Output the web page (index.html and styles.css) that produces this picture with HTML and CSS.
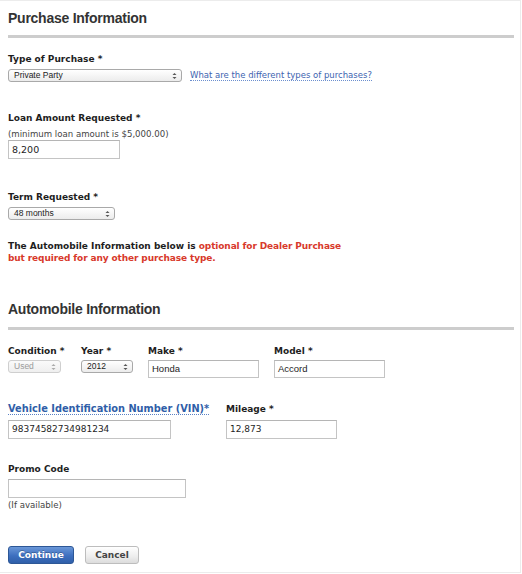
FILE: index.html
```html
<!DOCTYPE html>
<html>
<head>
<meta charset="utf-8">
<link rel="stylesheet" href="styles.css">
</head>
<body>
<div class="page">
  <h2 class="heading">Purchase Information</h2>
  <div class="rule"></div>

  <div class="label lbl-first">Type of Purchase *</div>
  <div class="row-inline">
    <span class="sel sel-type"><span class="sel-text">Private Party</span><svg class="arrows" width="5" height="8" viewBox="0 0 5 8"><path d="M0.5 3 L2.5 1 L4.5 3 Z M0.5 5 L2.5 7 L4.5 5 Z" fill="#555"/></svg></span>
    <a class="help-link">What are the different types of purchases?</a>
  </div>

  <div class="label lbl-loan">Loan Amount Requested *</div>
  <div class="hint">(minimum loan amount is $5,000.00)</div>
  <div class="input in-loan">8,200</div>

  <div class="label lbl-term">Term Requested *</div>
  <span class="sel sel-term"><span class="sel-text">48 months</span><svg class="arrows" width="5" height="8" viewBox="0 0 5 8"><path d="M0.5 3 L2.5 1 L4.5 3 Z M0.5 5 L2.5 7 L4.5 5 Z" fill="#555"/></svg></span>

  <p class="notice">The Automobile Information below is <span class="red">optional for Dealer Purchase<br>but required for any other purchase type.</span></p>

  <h2 class="heading heading2">Automobile Information</h2>
  <div class="rule rule2"></div>

  <div class="grid4">
    <div class="label">Condition *</div>
    <div class="label">Year *</div>
    <div class="label">Make *</div>
    <div class="label">Model *</div>
    <span class="sel sel-used disabled"><span class="sel-text">Used</span><svg class="arrows" width="5" height="8" viewBox="0 0 5 8"><path d="M0.5 3 L2.5 1 L4.5 3 Z M0.5 5 L2.5 7 L4.5 5 Z" fill="#aaa"/></svg></span>
    <span class="sel sel-year"><span class="sel-text">2012</span><svg class="arrows" width="5" height="8" viewBox="0 0 5 8"><path d="M0.5 3 L2.5 1 L4.5 3 Z M0.5 5 L2.5 7 L4.5 5 Z" fill="#555"/></svg></span>
    <div class="input in-sans in-make">Honda</div>
    <div class="input in-sans in-make">Accord</div>
  </div>

  <div class="grid2">
    <div class="label"><span class="vin">Vehicle Identification Number (VIN)*</span></div>
    <div class="label">Mileage *</div>
    <div class="input in-vin">98374582734981234</div>
    <div class="input in-mile">12,873</div>
  </div>

  <div class="label lbl-promo">Promo Code</div>
  <div class="input in-promo"></div>
  <div class="hint hint-promo">(If available)</div>

  <div class="buttons">
    <button class="btn btn-primary">Continue</button>
    <button class="btn btn-cancel">Cancel</button>
  </div>
</div>
</body>
</html>
```

FILE: styles.css
```css
html, body {
  margin: 0;
  padding: 0;
  background: #fff;
}
body {
  font-family: "DejaVu Sans", Verdana, sans-serif;
  color: #222;
}
.page {
  box-sizing: border-box;
  width: 521px;
  height: 573px;
  border-top: 1px solid #ececec;
  border-right: 1px solid #ececec;
  border-bottom: 1px solid #ececec;
  padding: 9px 6px 0 8px;
}
.heading {
  margin: 0;
  font-family: "Liberation Sans", Arial, sans-serif;
  font-weight: bold;
  font-size: 14px;
  line-height: 16px;
  color: #333;
  letter-spacing: -0.25px;
}
.rule {
  height: 3px;
  background: #cdcdcd;
  margin-top: 9px;
}
.label {
  font-weight: bold;
  font-size: 9px;
  line-height: 11px;
  color: #1e1e1e;
}
.lbl-first { margin-top: 16px; }
.row-inline {
  display: flex;
  align-items: center;
  margin-top: 4px;
  gap: 8px;
}
.sel {
  position: relative;
  display: inline-block;
  box-sizing: border-box;
  height: 13px;
  border: 1px solid #a9a9a9;
  border-radius: 3px;
  background: linear-gradient(#ffffff, #ececec);
  font-family: "Liberation Sans", Arial, sans-serif;
  font-size: 8.5px;
  line-height: 11px;
  color: #222;
  padding-left: 5px;
}
.sel .arrows {
  position: absolute;
  right: 4px;
  top: 1.5px;
}
.sel-type { width: 174px; }
.sel-term { width: 107px; margin-top: 4px; display: block; }
.sel-used { width: 53px; }
.sel-year { width: 52px; }
.disabled {
  border-color: #cfcfcf;
  color: #9a9a9a;
  background: linear-gradient(#fafafa, #efefef);
}
.help-link {
  font-size: 8.5px;
  line-height: 10px;
  color: #3d64b0;
  border-bottom: 1px dotted #6c8fcf;
  text-decoration: none;
}
.lbl-loan { margin-top: 31px; }
.hint {
  font-size: 8.6px;
  line-height: 10px;
  color: #444;
  margin-top: 5px;
}
.input {
  box-sizing: border-box;
  height: 19px;
  border: 1px solid #c4c4c4;
  border-top-color: #b5b5b5;
  background: #fff;
  font-size: 9px;
  line-height: 17px;
  padding-left: 3px;
  color: #1e1e1e;
}
.in-loan {
  width: 112px;
  margin-top: 1px;
  font-size: 9.5px;
}
.in-sans {
  font-family: "Liberation Sans", Arial, sans-serif;
  font-size: 9.5px;
}
.lbl-term { margin-top: 33px; }
.notice {
  margin: 20px 0 0;
  font-weight: bold;
  font-size: 9px;
  line-height: 12px;
  color: #1e1e1e;
}
.red {
  color: #d8392b;
  letter-spacing: -0.12px;
}
.heading2 { margin-top: 37px; }
.rule2 { margin-top: 10px; }
.grid4 {
  display: grid;
  grid-template-columns: 73px 67px 126px 126px;
  grid-template-rows: 11px auto;
  row-gap: 3px;
  align-items: start;
  margin-top: 16px;
}
.in-make {
  width: 111px;
  height: 18px;
  line-height: 16px;
}
.grid2 {
  display: grid;
  grid-template-columns: 218px 120px;
  grid-template-rows: 11px auto;
  row-gap: 5px;
  margin-top: 26px;
  align-items: end;
}
.vin {
  font-size: 9.8px;
  color: #2f5ea8;
  border-bottom: 1px dotted #5b82c4;
}
.in-vin { width: 163px; }
.in-mile { width: 111px; }
.lbl-promo { margin-top: 25px; }
.in-promo {
  width: 178px;
  margin-top: 4px;
}
.hint-promo { margin-top: 2px; }
.buttons {
  display: flex;
  gap: 11px;
  margin-top: 36px;
}
.btn {
  box-sizing: border-box;
  height: 18px;
  border-radius: 3px;
  font-family: "DejaVu Sans", Verdana, sans-serif;
  font-weight: bold;
  font-size: 9px;
  line-height: 16px;
  padding: 0;
  margin: 0;
  text-align: center;
}
.btn-primary {
  width: 66px;
  color: #fff;
  border: 1px solid #2d5796;
  background: linear-gradient(#6a97d8, #3d6fbf 55%, #2f5fa9);
  text-shadow: 0 -1px 0 rgba(0,0,0,0.25);
}
.btn-cancel {
  width: 54px;
  color: #444;
  border: 1px solid #bdbdbd;
  background: linear-gradient(#ffffff, #ededed 60%, #dcdcdc);
}
```
